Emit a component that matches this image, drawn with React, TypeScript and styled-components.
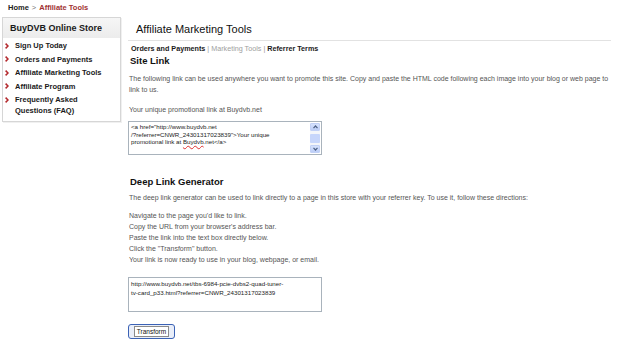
import React from 'react';
import styled, { createGlobalStyle } from 'styled-components';

const Global = createGlobalStyle`
  html, body { margin: 0; padding: 0; background: #fff; }
  body {
    font-family: "Liberation Sans", Arial, sans-serif;
    color: #333;
    width: 620px;
    height: 346px;
    overflow: hidden;
  }
`;

const Page = styled.div`
  padding-top: 3px;
`;

const Crumbs = styled.div`
  padding-left: 8px;
  font-size: 7.5px;
  line-height: 10px;
  font-weight: bold;
  color: #222;
`;

const CrumbSep = styled.span`
  font-weight: normal;
  color: #777;
  margin: 0 3px;
`;

const CrumbCurrent = styled.span`
  color: #a03232;
`;

const Layout = styled.div`
  display: flex;
  align-items: flex-start;
  margin-top: 4px;
`;

const Sidebar = styled.div`
  margin-left: 2px;
  width: 117px;
  border: 1px solid #d6d6d6;
  box-shadow: 1px 1px 0 #f0f0f0;
`;

const SideHeader = styled.div`
  height: 20px;
  line-height: 20px;
  padding-left: 7px;
  background: linear-gradient(#f6f6f6, #ececec);
  font-size: 9px;
  font-weight: bold;
  color: #1a1a1a;
`;

const SideList = styled.ul`
  list-style: none;
  margin: 0;
  padding: 2px 8px 5px 2px;
`;

const SideItem = styled.li`
  display: flex;
  align-items: flex-start;
  gap: 6px;
  font-size: 7.5px;
  line-height: 11px;
  font-weight: bold;
  color: #1a1a1a;
  margin-bottom: 2.5px;
  &:last-child { margin-bottom: 0; }
`;

const Chevron = styled.svg`
  flex: none;
  width: 4px;
  height: 6px;
  margin-top: 2.5px;
`;

const Main = styled.div`
  margin-left: 7px;
  width: 483px;
`;

const Title = styled.h1`
  margin: 0;
  padding: 5px 0 4px 8px;
  font-size: 11px;
  line-height: 14px;
  font-weight: normal;
  color: #111;
  border-bottom: 1px solid #e2e2e2;
`;

const Tabs = styled.div`
  margin-top: 3px;
  padding-left: 3px;
  font-size: 7.2px;
  line-height: 9px;
  color: #999;
`;

const Tab = styled.span<{ $active?: boolean }>`
  font-weight: ${p => (p.$active ? 'bold' : 'normal')};
  color: ${p => (p.$active ? '#1a1a1a' : '#a0a0a0')};
`;

const Heading = styled.h2<{ $top: number }>`
  margin: ${p => p.$top}px 0 0 0;
  padding-left: 2px;
  font-size: 9.5px;
  line-height: 11px;
  font-weight: bold;
  color: #111;
`;

const Para = styled.p<{ $top: number }>`
  margin: ${p => p.$top}px 0 0 0;
  padding-left: 1px;
  font-size: 7px;
  line-height: 11px;
  color: #555;
`;

const Box = styled.div<{ $top: number; $h: number }>`
  margin-top: ${p => p.$top}px;
  width: 194px;
  height: ${p => p.$h}px;
  border: 1px solid #a9b3bc;
  display: flex;
  background: #fff;
  box-sizing: border-box;
`;

const BoxText = styled.div<{ $lh: number }>`
  flex: 1;
  padding: 1px 2px 0 2px;
  font-size: 6.2px;
  line-height: ${p => p.$lh}px;
  color: #222;
  word-break: break-all;
`;

const Misspelled = styled.span`
  text-decoration: underline wavy #e03030;
  text-decoration-thickness: 0.5px;
  text-underline-offset: 1px;
`;

const Scrollbar = styled.div`
  flex: none;
  width: 10px;
  margin: 1px 1px 1px 0;
  background: #f4f6fa;
  display: flex;
  flex-direction: column;
  justify-content: space-between;
  align-items: center;
`;

const ScrollBtn = styled.div`
  width: 10px;
  height: 8px;
  border-radius: 1px;
  background: linear-gradient(#d6e2fd, #bccdf7);
  border: 1px solid #c2d1f6;
  box-sizing: border-box;
  display: flex;
  align-items: center;
  justify-content: center;
`;

const Thumb = styled.div`
  width: 10px;
  height: 9px;
  background: #c7d6fb;
  border-radius: 1px;
`;

const Button = styled.button`
  margin-top: 12px;
  margin-left: 0;
  width: 47px;
  height: 15px;
  padding: 0;
  border: 1.5px solid #3b62b5;
  border-radius: 3px;
  background: #e9eef9;
  display: flex;
  align-items: center;
  justify-content: center;
  box-sizing: border-box;
  font-family: "Liberation Sans", Arial, sans-serif;
`;

const ButtonFace = styled.span`
  display: block;
  border: 1px solid #8a8a8a;
  background: #fff;
  padding: 0 2px;
  font-size: 6.5px;
  line-height: 9px;
  color: #111;
`;

const Arrow = ({ up }: { up?: boolean }) => (
  <svg width="5" height="4" viewBox="0 0 5 4">
    <polyline
      points={up ? '0.5,3.2 2.5,1 4.5,3.2' : '0.5,0.8 2.5,3 4.5,0.8'}
      fill="none"
      stroke="#4d6185"
      strokeWidth="1.2"
    />
  </svg>
);

const Chev = () => (
  <Chevron viewBox="0 0 4 6">
    <polyline points="0.6,0.6 3,3 0.6,5.4" fill="none" stroke="#b3272b" strokeWidth="1.5" />
  </Chevron>
);

const sideItems = [
  'Sign Up Today',
  'Orders and Payments',
  'Affiliate Marketing Tools',
  'Affiliate Program',
  'Frequently Asked Questions (FAQ)',
];

export default function App() {
  return (
    <>
      <Global />
      <Page>
        <Crumbs>
          Home<CrumbSep>&gt;</CrumbSep>
          <CrumbCurrent>Affiliate Tools</CrumbCurrent>
        </Crumbs>
        <Layout>
          <Sidebar>
            <SideHeader>BuyDVB Online Store</SideHeader>
            <SideList>
              {sideItems.map(t => (
                <SideItem key={t}>
                  <Chev />
                  <span>{t}</span>
                </SideItem>
              ))}
            </SideList>
          </Sidebar>
          <Main>
            <Title>Affiliate Marketing Tools</Title>
            <Tabs>
              <Tab $active>Orders and Payments</Tab> | <Tab>Marketing Tools</Tab> |{' '}
              <Tab $active>Referrer Terms</Tab>
            </Tabs>
            <Heading $top={2}>Site Link</Heading>
            <Para $top={7}>
              The following link can be used anywhere you want to promote this site. Copy and paste the HTML code
              following each image into your blog or web page to link to us.
            </Para>
            <Para $top={9}>Your unique promotional link at Buydvb.net</Para>
            <Box $top={6} $h={34}>
              <BoxText $lh={7.5}>
                &lt;a href="http://www.buydvb.net
                <br />
                /?referrer=CNWR_24301317023839"&gt;Your unique
                <br />
                promotional link at <Misspelled>Buydvb</Misspelled>.net&lt;/a&gt;
              </BoxText>
              <Scrollbar>
                <ScrollBtn>
                  <Arrow up />
                </ScrollBtn>
                <Thumb />
                <ScrollBtn>
                  <Arrow />
                </ScrollBtn>
              </Scrollbar>
            </Box>
            <Heading $top={21}>Deep Link Generator</Heading>
            <Para $top={5}>
              The deep link generator can be used to link directly to a page in this store with your referrer key. To
              use it, follow these directions:
            </Para>
            <Para $top={7}>
              Navigate to the page you'd like to link.
              <br />
              Copy the URL from your browser's address bar.
              <br />
              Paste the link into the text box directly below.
              <br />
              Click the "Transform" button.
              <br />
              Your link is now ready to use in your blog, webpage, or email.
            </Para>
            <Box $top={12} $h={35}>
              <BoxText $lh={9}>
                http://www.buydvb.net/tbs-6984-pcie-dvbs2-quad-tuner-
                <br />
                tv-card_p33.html?referrer=CNWR_24301317023839
              </BoxText>
            </Box>
            <Button type="button">
              <ButtonFace>Transform</ButtonFace>
            </Button>
          </Main>
        </Layout>
      </Page>
    </>
  );
}
